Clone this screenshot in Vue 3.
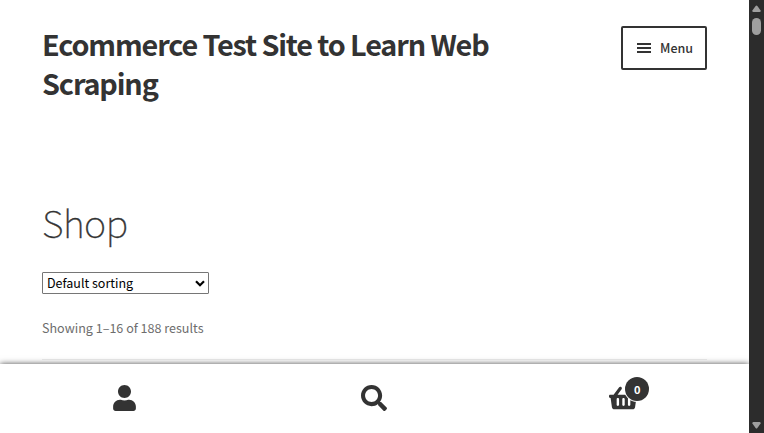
<script setup>
const title = 'Ecommerce Test Site to Learn Web Scraping'
const cartCount = 0
const resultText = 'Showing 1–16 of 188 results'
</script>

<template>
  <div class="window">
    <div class="page">
      <main class="content">
        <header class="masthead">
          <h1 class="site-title">{{ title }}</h1>
          <button class="menu-toggle">
            <span class="bars"><i></i><i></i><i></i></span>
            <span class="menu-label">Menu</span>
          </button>
        </header>
        <h2 class="page-title">Shop</h2>
        <div class="orderby" role="combobox" tabindex="0">
          <span class="orderby-label">Default sorting</span>
          <svg class="chevron" viewBox="0 0 10 7"><path d="M1 1.2L5 5.2L9 1.2" /></svg>
        </div>
        <p class="result-count">{{ resultText }}</p>
        <hr class="rule" />
      </main>
      <nav class="handheld-bar">
        <a class="bar-item">
          <svg class="icon user" viewBox="0 0 448 512"><path d="M224 256c70.7 0 128-57.3 128-128S294.7 0 224 0 96 57.3 96 128s57.3 128 128 128zm89.6 32h-16.7c-22.2 10.2-46.9 16-72.9 16s-50.6-5.8-72.9-16h-16.7C60.2 288 0 348.2 0 422.4V464c0 26.5 21.5 48 48 48h352c26.5 0 48-21.5 48-48v-41.6c0-74.2-60.2-134.4-134.4-134.4z" /></svg>
        </a>
        <a class="bar-item">
          <svg class="icon search" viewBox="0 0 512 512"><path d="M505 442.7L405.3 343c-4.5-4.5-10.6-7-17-7H372c27.6-35.3 44-79.7 44-128C416 93.1 322.9 0 208 0S0 93.1 0 208s93.1 208 208 208c48.3 0 92.7-16.4 128-44v16.3c0 6.4 2.5 12.5 7 17l99.7 99.7c9.4 9.4 24.6 9.4 33.9 0l28.3-28.3c9.4-9.4 9.4-24.6.1-34zM208 336c-70.7 0-128-57.2-128-128 0-70.7 57.2-128 128-128 70.7 0 128 57.2 128 128 0 70.7-57.2 128-128 128z" /></svg>
        </a>
        <a class="bar-item">
          <span class="cart">
            <svg class="icon basket" viewBox="0 0 576 512"><path d="M576 216v16c0 13.255-10.745 24-24 24h-8l-26.113 182.788C514.509 462.435 494.257 480 470.37 480H105.63c-23.887 0-44.139-17.565-47.518-41.212L32 256h-8c-13.255 0-24-10.745-24-24v-16c0-13.255 10.745-24 24-24h67.341l106.78-146.821c10.395-14.292 30.407-17.453 44.701-7.058 14.293 10.395 17.453 30.408 7.058 44.701L170.477 192h235.046L326.12 82.821c-10.395-14.292-7.234-34.306 7.059-44.701 14.291-10.395 34.306-7.235 44.701 7.058L484.659 192H552c13.255 0 24 10.745 24 24zM312 392V280c0-13.255-10.745-24-24-24s-24 10.745-24 24v112c0 13.255 10.745 24 24 24s24-10.745 24-24zm112 0V280c0-13.255-10.745-24-24-24s-24 10.745-24 24v112c0 13.255 10.745 24 24 24s24-10.745 24-24zm-224 0V280c0-13.255-10.745-24-24-24s-24 10.745-24 24v112c0 13.255 10.745 24 24 24s24-10.745 24-24z" /></svg>
            <span class="count">{{ cartCount }}</span>
          </span>
        </a>
      </nav>
    </div>
    <div class="scrollbar">
      <svg class="arrow" viewBox="0 0 9 8"><path d="M3.6 1Q4.5 0 5.4 1L8.6 5.4Q9 7 7.6 7H1.4Q0 7 .4 5.4Z" /></svg>
      <div class="thumb"></div>
      <svg class="arrow down" viewBox="0 0 9 8"><path d="M3.6 1Q4.5 0 5.4 1L8.6 5.4Q9 7 7.6 7H1.4Q0 7 .4 5.4Z" /></svg>
    </div>
  </div>
</template>

<style>
body {
  margin: 0;
  background: #fff;
}
</style>

<style scoped>
.window {
  display: flex;
  height: 433px;
  overflow: hidden;
  font-family: "Source Sans Pro", "Noto Sans CJK JP", "Noto Sans", sans-serif;
  color: #333;
}
.page {
  flex: 1;
  display: flex;
  flex-direction: column;
  overflow: hidden;
}
.content {
  flex: 1;
  min-height: 0;
  padding: 24px 42px 0;
}
.masthead {
  display: flex;
  justify-content: space-between;
  align-items: flex-start;
  height: 174px;
}
.site-title {
  margin: 0;
  width: 480px;
  font-size: 28.8px;
  line-height: 39px;
  font-weight: 700;
  letter-spacing: -1.13px;
}
.menu-toggle {
  display: flex;
  align-items: center;
  box-sizing: border-box;
  width: 86px;
  height: 44px;
  margin: 2px 0 0;
  padding: 0 0 0 14px;
  border: 2px solid #333;
  border-radius: 2px;
  background: #fff;
  color: #333;
  font-family: inherit;
}
.bars {
  display: flex;
  flex-direction: column;
  gap: 2px;
  width: 14px;
}
.bars i {
  height: 2px;
  background: #333;
}
.menu-label {
  margin-left: 9px;
  font-size: 12.5px;
  font-weight: 500;
  line-height: 20px;
}
.page-title {
  margin: 0;
  height: 74px;
  font-size: 37.7px;
  line-height: 48px;
  font-weight: 100;
  letter-spacing: -0.5px;
  -webkit-text-stroke: 0.35px #333;
}
.orderby {
  display: flex;
  align-items: center;
  justify-content: space-between;
  box-sizing: border-box;
  width: 167px;
  height: 22px;
  padding: 0 3px 0 4px;
  border: 1px solid #767676;
  border-radius: 1px;
  background: #fff;
  color: #000;
}
.orderby-label {
  font-size: 12.5px;
  line-height: 18px;
  padding-bottom: 1px;
}
.chevron {
  width: 10px;
  height: 7px;
  fill: none;
  stroke: #000;
  stroke-width: 2.2;
}
.result-count {
  margin: 24px 0 0;
  height: 41px;
  font-size: 12.55px;
  line-height: 20px;
  color: #6d6d6d;
}
.rule {
  height: 1px;
  margin: 0;
  border: 0;
  background: #eee;
}
.handheld-bar {
  position: relative;
  display: flex;
  height: 69px;
  flex: none;
  background: #fff;
  box-shadow: 0 0 6px rgba(0, 0, 0, 0.7);
}
.bar-item {
  flex: 1;
  display: flex;
  align-items: center;
  justify-content: center;
  padding: 0 1px 1px 0;
}
.icon {
  display: block;
  height: 26px;
  fill: #333;
}
.user { width: 23px; }
.search { width: 26px; }
.basket { width: 29px; }
.cart { position: relative; }
.count {
  position: absolute;
  left: 16px;
  top: -8px;
  width: 24px;
  height: 24px;
  box-shadow: 0 0 0 1px #fff;
  border-radius: 50%;
  background: #333;
  color: #fff;
  text-align: center;
  font-size: 11px;
  font-weight: 700;
  line-height: 24px;
}
.scrollbar {
  display: flex;
  flex-direction: column;
  align-items: center;
  box-sizing: border-box;
  width: 15px;
  padding: 5px 0 4px;
  background: #2c2c2c;
}
.arrow {
  width: 9px;
  height: 8px;
  fill: #9f9f9f;
}
.thumb {
  width: 9px;
  height: 17px;
  margin-top: 5px;
  border-radius: 5px;
  background: #9f9f9f;
}
.down {
  margin-top: auto;
  transform: rotate(180deg);
}
</style>
